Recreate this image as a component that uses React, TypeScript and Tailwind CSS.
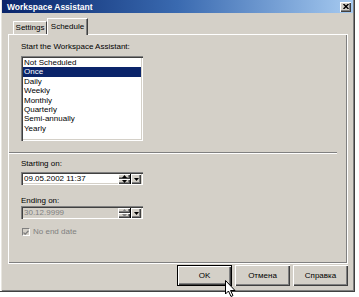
import React from "react";

const items = ["Not Scheduled", "Once", "Daily", "Weekly", "Monthly", "Quarterly", "Semi-annually", "Yearly"];

const raised = "shadow-[inset_1px_1px_0_#ffffff,inset_-1px_-1px_0_#404040,inset_-2px_-2px_0_#808080]";
const sunken = "shadow-[inset_1px_1px_0_#808080,inset_2px_2px_0_#404040,inset_-1px_-1px_0_#ffffff,inset_-2px_-2px_0_#d4d0c8]";

const SpinBox = ({ value, disabled }: { value: string; disabled?: boolean }) => (
  <div
    className={`relative flex items-center w-[122px] h-[13px] ${sunken} ${disabled ? "bg-[#d4d0c8] text-[#808080]" : "bg-white text-black"}`}
  >
    <span className="pl-[3px] leading-[10px]">{value}</span>
    <div className="absolute right-[2px] top-[2px] bottom-[1px] flex">
      <div className={`flex flex-col w-[12px] bg-[#d4d0c8]`}>
        <div className={`flex-1 flex items-center justify-center ${raised}`}>
          <svg width="5" height="3" viewBox="0 0 5 3">
            <path d="M0 3 L2.5 0 L5 3 Z" fill={disabled ? "#808080" : "#000"} />
          </svg>
        </div>
        <div className={`flex-1 flex items-center justify-center ${raised}`}>
          <svg width="5" height="3" viewBox="0 0 5 3">
            <path d="M0 0 L2.5 3 L5 0 Z" fill={disabled ? "#808080" : "#000"} />
          </svg>
        </div>
      </div>
      <div className="w-[1px] bg-black" />
      <div className={`w-[10px] flex items-center justify-center bg-[#d4d0c8] ${raised}`}>
        <svg width="5" height="3" viewBox="0 0 5 3">
          <path d="M0 0 L2.5 3 L5 0 Z" fill="#000" />
        </svg>
      </div>
    </div>
  </div>
);

export default function App() {
  return (
    <div
      className="relative w-[359px] h-[297px] bg-white overflow-hidden text-[8px] text-black"
      style={{ fontFamily: '"Liberation Sans", Arial, sans-serif' }}
    >
      <div className="flex flex-col w-[355px] h-[292px] bg-[#d4d0c8] border-r border-b border-[#404040] shadow-[inset_1px_0_0_#ffffff,inset_2px_0_0_#e8e6e0,inset_-1px_-1px_0_#808080]">
        {/* title bar */}
        <div className="flex items-center justify-between h-[13px] ml-[2px] mr-[1px] pl-[5px] pr-[2px] bg-linear-to-r from-[#0a246a] via-[#3a6ab0] to-[#a6caf0]">
          <span className="text-white font-bold text-[8.5px] leading-[10px]">Workspace Assistant</span>
          <div className={`flex items-center justify-center w-[11px] h-[10px] bg-[#d4d0c8] ${raised}`}>
            <svg width="6" height="5" viewBox="0 0 6 5">
              <path d="M0.5 0 L5.5 5 M5.5 0 L0.5 5" stroke="#000" strokeWidth="1.4" />
            </svg>
          </div>
        </div>

        {/* tabs */}
        <div className="flex items-end h-[21px] ml-[13px]">
          <div className="flex items-center justify-center w-[34px] h-[13px] border-t border-l border-white border-r border-r-[#404040] rounded-tl-[1px]">
            <span className="leading-[10px]">Settings</span>
          </div>
          <div className="relative z-10 flex items-start justify-center w-[41px] h-[17px] -mb-px pt-[3px] bg-[#d4d0c8] border-t border-l border-white border-r border-r-[#404040] shadow-[inset_-1px_0_0_#808080]">
            <span className="leading-[10px]">Schedule</span>
          </div>
        </div>

        {/* panel */}
        <div className="flex flex-col w-[340px] h-[230px] ml-[8px] px-[12px] pt-[7px] border-t border-l border-white border-r border-b border-[#404040] shadow-[inset_-1px_-1px_0_#808080]">
          <div className="h-[10px] leading-[10px]">Start the Workspace Assistant:</div>
          <div className={`mt-[4px] w-[122px] h-[85px] bg-white p-[2px] ${sunken}`}>
            <div className="pt-[0px]">
              {items.map((it) => (
                <div
                  key={it}
                  className={`h-[9.4px] leading-[9.4px] pl-[1px] ${it === "Once" ? "bg-[#0a246a] text-white" : ""}`}
                >
                  {it}
                </div>
              ))}
            </div>
          </div>

          <div className="mt-[11px] -ml-[12px] w-[328px] h-[2px] border-t border-[#808080] border-b border-b-white" />

          <div className="mt-[5px] h-[10px] leading-[10px]">Starting on:</div>
          <div className="mt-[3px]">
            <SpinBox value="09.05.2002 11:37" />
          </div>

          <div className="mt-[11px] h-[10px] leading-[10px]">Ending on:</div>
          <div>
            <SpinBox value="30.12.9999" disabled />
          </div>

          <div className="mt-[8px] flex items-center gap-[3px] h-[10px] pl-[1px]">
            <div className="flex items-center justify-center w-[8px] h-[8px] bg-[#d4d0c8] border border-t-[#808080] border-l-[#808080] border-r-white border-b-white">
              <svg width="6" height="5" viewBox="0 0 6 5">
                <path d="M0.5 2.5 L2.2 4.2 L5.5 0.8" stroke="#808080" strokeWidth="1.3" fill="none" />
              </svg>
            </div>
            <span className="leading-[10px] text-[#808080]">No end date</span>
          </div>
        </div>

        {/* buttons */}
        <div className="flex justify-end gap-[3px] w-[340px] ml-[8px] mt-[1px]">
          <div className="w-[55px] h-[21px] border border-black">
            <div className={`flex items-center justify-center w-full h-full ${raised}`}>OK</div>
          </div>
          <div className={`flex items-center justify-center w-[55px] h-[21px] ${raised}`}>Отмена</div>
          <div className={`flex items-center justify-center w-[55px] h-[21px] ${raised}`}>Справка</div>
        </div>
      </div>

      {/* mouse cursor */}
      <svg className="absolute left-[225px] top-[280px]" width="12" height="18" viewBox="0 0 12 18">
        <path
          d="M0.5 0.5 L0.5 14 L3.5 11 L6 16.5 L8 15.5 L5.5 10.5 L10 10.5 Z"
          fill="#fff"
          stroke="#000"
          strokeWidth="1"
        />
      </svg>
    </div>
  );
}
